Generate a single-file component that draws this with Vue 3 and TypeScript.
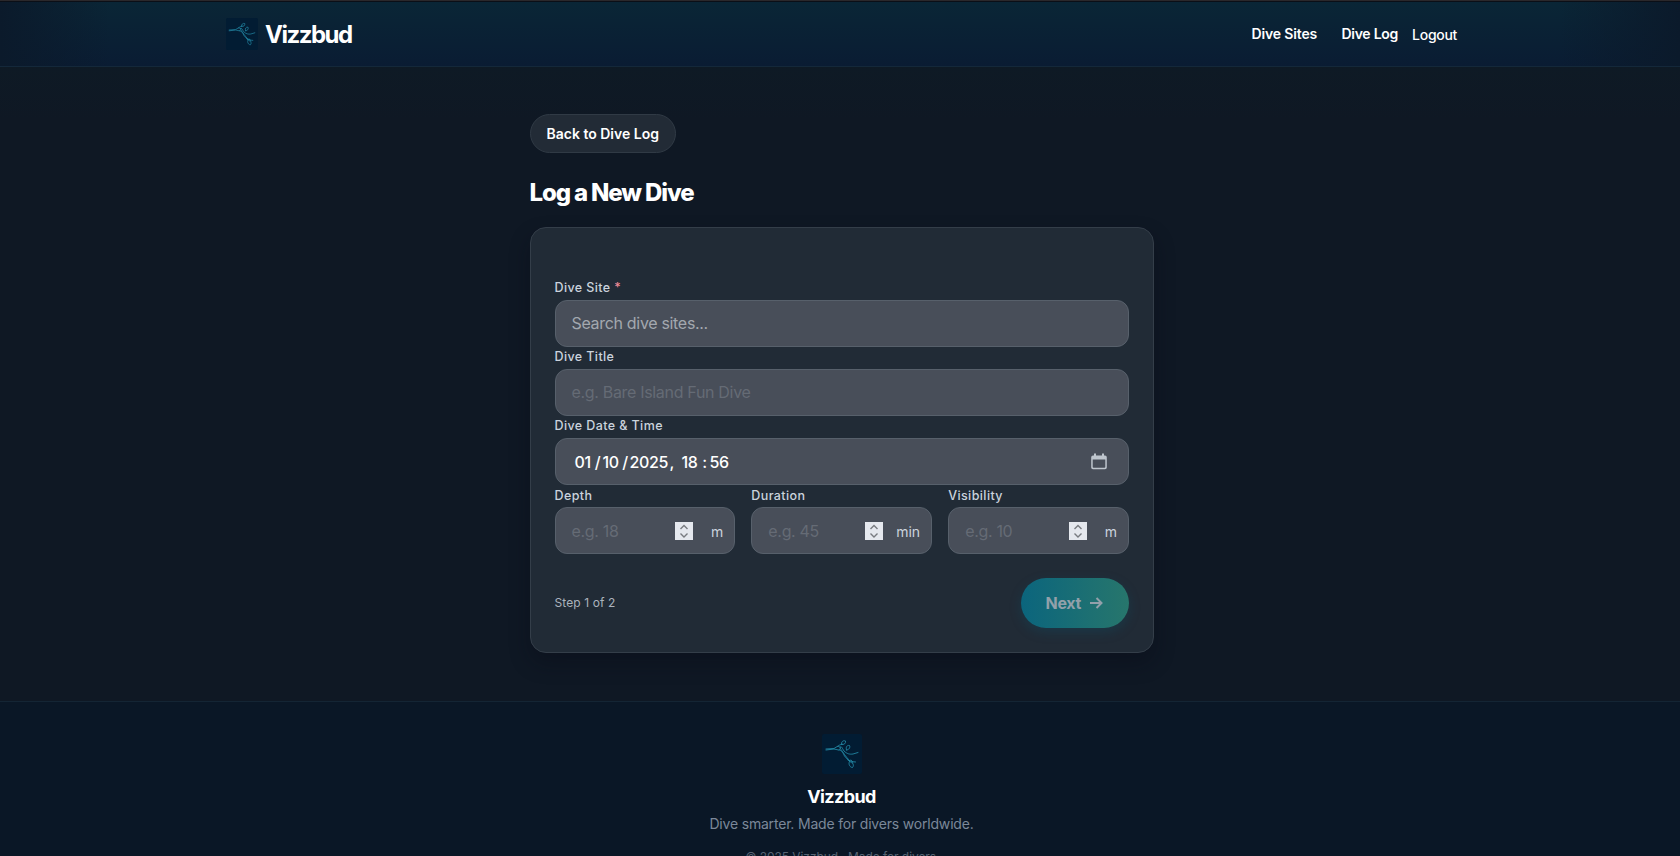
<script setup lang="ts">
import { ref } from 'vue'

interface Measure {
  id: string
  label: string
  example: string
  unit: string
}

const links: string[] = ['Dive Sites', 'Dive Log']
const measures: Measure[] = [
  { id: 'depth', label: 'Depth', example: 'e.g. 18', unit: 'm' },
  { id: 'duration', label: 'Duration', example: 'e.g. 45', unit: 'min' },
  { id: 'visibility', label: 'Visibility', example: 'e.g. 10', unit: 'm' },
]
const date = ref<string[]>(['01', '/', '10', '/', '2025', ',', '18', ':', '56'])
</script>

<template>
  <div class="page">
    <header class="header">
      <div class="bar">
        <a class="brand">
          <svg class="mark" viewBox="0 0 40 40">
            <rect width="40" height="40" rx="2" />
            <path d="M4 15 12 14.500 16 12 19 14 16.500 16 12 15 4 16M15.500 12.500C17 11 18 11 20 10M19.500 10.500C19 8 21 6 23.500 7C24 9.500 22 11 19.500 10.500M18 13C20 12 20 14 22 17C25 20 28 20.500 31 20L36 18.500M24.500 16C23.500 13 25 11 27.500 11.500C28.500 13.500 27 16 24.500 16M17 16C20 16 21 19 22.500 22L27 27M19 15.500C21 18 23 22 28 27M26 26C29 27 31 28 33.500 28M27.500 27.500C26 30 28 33.500 30.500 33.500C32.500 31 31 29 27.500 27.500M29 26 31 29" />
          </svg>
          <span>Vizzbud</span>
        </a>
        <nav class="nav">
          <a v-for="l in links" :key="l">{{ l }}</a>
          <button class="logout">Logout</button>
        </nav>
      </div>
    </header>

    <main class="main">
      <a class="back"><span>Back to Dive Log</span></a>
      <h1>Log a New Dive</h1>
      <form class="card">
        <label><span>Dive Site <i>*</i></span></label>
        <div class="field"><span class="hint strong">Search dive sites...</span></div>
        <label><span>Dive Title</span></label>
        <div class="field"><span class="hint">e.g. Bare Island Fun Dive</span></div>
        <label><span>Dive Date &amp; Time</span></label>
        <div class="field date">
          <span class="stamp"><span v-for="(p, i) in date" :key="i" :class="['part', 'p' + i]">{{ p }}</span></span>
          <svg class="calendar" viewBox="0 0 16 18">
            <path d="M2 2.500h1V.5h2v2h6v-2h2v2h1a1.800 1.800 0 0 1 1.800 1.800v10.200a1.800 1.800 0 0 1-1.800 1.800H2a1.800 1.800 0 0 1-1.800-1.800V4.300A1.800 1.800 0 0 1 2 2.500ZM1.700 6.500V14a.8.8 0 0 0 .8.800h11a.8.8 0 0 0 .8-.8V6.500Z" />
          </svg>
        </div>
        <div class="grid">
          <div v-for="m in measures" :key="m.id">
            <label><span>{{ m.label }}</span></label>
            <div class="field small">
              <span class="hint">{{ m.example }}</span>
              <svg class="spin" viewBox="0 0 18 18">
                <rect width="18" height="18" />
                <path d="m5.500 7 3.500-3.500L12.500 7M5.500 11.500 9 15l3.500-3.500" />
              </svg>
              <span :class="['unit', m.id]">{{ m.unit }}</span>
            </div>
          </div>
        </div>
        <div class="actions">
          <span class="step">Step 1 of 2</span>
          <button class="next" type="button" disabled>
            <span>Next</span>
            <svg viewBox="0 0 14 14"><path d="M1 7h11.500M7.500 2l5 5-5 5" /></svg>
          </button>
        </div>
      </form>
    </main>

    <footer class="footer">
      <svg class="mark" viewBox="0 0 40 40">
        <rect width="40" height="40" rx="2" />
        <path d="M4 15 12 14.500 16 12 19 14 16.500 16 12 15 4 16M15.500 12.500C17 11 18 11 20 10M19.500 10.500C19 8 21 6 23.500 7C24 9.500 22 11 19.500 10.500M18 13C20 12 20 14 22 17C25 20 28 20.500 31 20L36 18.500M24.500 16C23.500 13 25 11 27.500 11.500C28.500 13.500 27 16 24.500 16M17 16C20 16 21 19 22.500 22L27 27M19 15.500C21 18 23 22 28 27M26 26C29 27 31 28 33.500 28M27.500 27.500C26 30 28 33.500 30.500 33.500C32.500 31 31 29 27.500 27.500M29 26 31 29" />
      </svg>
      <strong>Vizzbud</strong>
      <p class="tagline">Dive smarter. Made for divers worldwide.</p>
      <p class="copy">© 2025 Vizzbud · Made for divers.</p>
    </footer>
  </div>
</template>

<style>
html, body { margin: 0; overflow: hidden; background: #0f1823; }
</style>

<style scoped>
* { box-sizing: border-box; }
.page {
  height: 856px; overflow: hidden; display: flex; flex-direction: column;
  font-family: Inter, "Liberation Sans", sans-serif; color: #fff;
  background: linear-gradient(#0e1a25 66px, #0f1824 120px);
}
button { font-family: inherit; color: inherit; border: 0; background: none; padding: 0; }
.header {
  flex: none; height: 67px; border-top: 1px solid #2b282b; border-bottom: 1px solid #14283a;
  background:
    linear-gradient(90deg, #0b1a2b 0, #0b1a2b00 110px, #0b1a2b00 1560px, #0b1a2b 1680px),
    linear-gradient(#0a2636, #0a1c33);
  box-shadow: inset 0 1px #0b0f17;
}
.bar { width: 1231px; height: 65px; margin-left: 226px; display: flex; justify-content: space-between; align-items: center; }
.brand { display: flex; align-items: center; gap: 7px; font-size: 24px; font-weight: 700; letter-spacing: -1.500px; }
.brand span { padding-top: 2px; }
.mark { display: block; width: 40px; height: 40px; }
.brand .mark { width: 32px; height: 32px; }
.mark rect { fill: #021c33; }
.mark path { fill: none; stroke: #2186a3; stroke-width: 0.900; stroke-linejoin: round; stroke-linecap: round; }
.nav { display: flex; align-items: center; font-size: 14px; font-weight: 600; line-height: 20px; }
.nav a { margin-right: 24.300px; letter-spacing: -0.15px; }
.nav a:nth-child(2) { margin-right: 14px; letter-spacing: -0.250px; }
.logout { font-size: 14px; font-weight: 500; line-height: 20px; padding-top: 2px; letter-spacing: -0.3px; }
.main { width: 624.500px; margin-left: 529.500px; flex: none; height: 634px; padding-top: 47px; }
.back {
  display: flex; align-items: center; justify-content: center; width: 146.500px; height: 39px;
  border: 1px solid #303a45; border-radius: 20px; background: #222b36;
  font-size: 14px; font-weight: 600;
}
h1 { margin: 24px 0 18px; font-size: 24px; line-height: 32px; font-weight: 800; letter-spacing: -1.130px; white-space: nowrap; }
.card {
  height: 426px; padding: 49.400px 24px 0; border: 1px solid #343e49; border-radius: 16px;
  background: #212b36; box-shadow: 0 10px 20px rgba(10, 12, 25, 0.42);
}
label { display: flex; align-items: center; height: 22.300px; padding-bottom: 2px; font-size: 12.500px; font-weight: 500; color: #cbd3dd; letter-spacing: 0.400px; }
label i { font-style: normal; color: #f08a98; }
.field {
  display: flex; align-items: center; height: 46.900px; padding: 0 17px 0 16px; border: 1px solid #57606b;
  border-radius: 12px; background: #484e59; font-size: 16px; white-space: pre;
}
.hint { color: #656b75; letter-spacing: -0.320px; }
.hint.strong { color: #a3a8af; }
.date { padding: 1px 21px 0 19px; justify-content: space-between; }
.stamp { display: flex; font-weight: 500; letter-spacing: -0.350px; }
.p0, .p2 { width: 18px; }
.p1 { width: 10px; text-align: center; }
.p3 { width: 9px; text-align: center; }
.p4 { width: 39px; }
.p5 { width: 13px; padding-left: 1px; }
.p6 { width: 18px; }
.p7 { width: 10px; text-align: center; }
.calendar { width: 16px; height: 18px; fill: #bec5cd; }
.grid { display: grid; grid-template-columns: repeat(3, 1fr); gap: 16px; }
.small { padding-right: 11px; }
.spin { width: 18px; height: 18px; margin-left: auto; }
.spin rect { fill: #e5e8ee; }
.spin path { fill: none; stroke: #787b80; stroke-width: 1.400; }
.unit { width: 30px; text-align: right; font-size: 14px; color: #cbd3dd; padding-top: 2px; }
.unit.duration { width: 37px; }
.actions { display: flex; justify-content: space-between; align-items: center; margin-top: 23.500px; }
.step { font-size: 12px; color: #abb3bd; letter-spacing: 0.1px; }
.next {
  display: flex; align-items: center; gap: 8px; width: 108px; height: 50px; padding-left: 24.500px; border-radius: 25px;
  background: linear-gradient(90deg, #0b657d, #27766c); color: #92a0aa;
  font-size: 16px; font-weight: 700; letter-spacing: -0.3px; box-shadow: 0 4px 12px rgba(12, 90, 115, 0.28);
}
.next svg { width: 14px; height: 14px; fill: none; stroke: currentColor; stroke-width: 2; }
.footer {
  flex: none; height: 190px; padding: 32px 0 0 3px; border-top: 1px solid #142534;
  background: #0a1726; display: flex; flex-direction: column; align-items: center;
}
.footer strong { margin-top: 9px; font-size: 18px; line-height: 28px; font-weight: 700; letter-spacing: -0.600px; }
.tagline { margin: 3px 0 0; font-size: 14px; line-height: 20px; color: #7b8899; letter-spacing: -0.190px; }
.copy { margin: 15px 0 0; padding-left: 2px; font-size: 12px; line-height: 16px; color: #566373; letter-spacing: -0.070px; }
</style>
